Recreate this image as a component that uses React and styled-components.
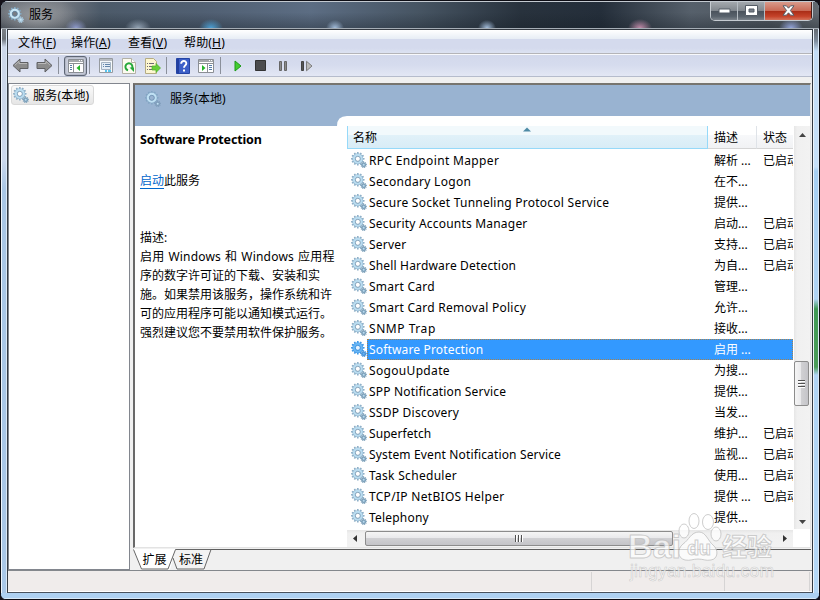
import React from 'react';
import styled, { createGlobalStyle } from 'styled-components';

const GlobalStyle = createGlobalStyle`
  * {
    box-sizing: border-box;
  }
  body {
    margin: 0;
    width: 820px;
    height: 600px;
    overflow: hidden;
    background: #15121a;
    color: #000;
    font: 12px/19px 'Noto Sans', 'Noto Sans CJK SC', sans-serif;
  }
`;

const Window = styled.div`
  position: relative;
  display: flex;
  flex-direction: column;
  width: 820px;
  height: 600px;
  border: 1px solid #0d0d14;
  border-radius: 8px 8px 6px 6px;
  overflow: hidden;
  background: #a8c8e8;
`;

const TitleBar = styled.header`
  display: flex;
  align-items: flex-start;
  height: 28px;
  padding-left: 7px;
  border-top: 1px solid #c3c9d0;
  border-bottom: 1px solid #a5adb5;
  background:
    radial-gradient(ellipse 11px 9px at 75px 26px, #8f9bcd, transparent),
    radial-gradient(ellipse 13px 9px at 137px 26px, #93a3b4, transparent),
    radial-gradient(ellipse 12px 9px at 210px 26px, #4b9fd4, transparent),
    radial-gradient(ellipse 9px 8px at 334px 26px, #a3bddb, transparent),
    radial-gradient(ellipse 9px 8px at 486px 26px, #a3bddb, transparent),
    radial-gradient(ellipse 12px 9px at 639px 26px, #bf8aa8, transparent),
    radial-gradient(ellipse 12px 9px at 790px 26px, #93a4da, transparent),
    radial-gradient(ellipse 42px 20px at 36px 14px, #9a9da1, transparent),
    linear-gradient(rgba(0, 0, 0, 0) 40%, rgba(20, 28, 36, 0.35)),
    linear-gradient(90deg, #686e76 0, #737880 60px, #4c5a69 100px, #505f72 200px, #5c6d83 310px, #465462 420px, #28323d 520px, #242e3a 600px, #56606b 690px, #50575f 770px, #646b72 820px);
`;

const WindowTitle = styled.div`
  display: flex;
  align-items: center;
  flex: 1;
  gap: 5px;
  height: 25px;
`;

const WindowButtons = styled.div`
  display: flex;
  height: 19px;
  margin-right: 6px;
  border: 1px solid #c5cbd1;
  border-top: 0;
  border-radius: 0 0 5px 5px;
  overflow: hidden;
`;

const WindowButton = styled.div`
  display: flex;
  align-items: center;
  justify-content: center;
  width: ${({ $close }) => ($close ? 47 : 27)}px;
  padding-bottom: 1px;
  border-right: 1px solid ${({ $close }) => ($close ? '#4b1c16' : '#b6bdc4')};
  background: ${({ $close }) =>
    $close
      ? 'linear-gradient(#d99a8b 0, #c96b57 48%, #a92c16 50%, #c5432a 80%, #d3745c)'
      : 'linear-gradient(#a3a8ad 0, #81878e 48%, #4a525c 50%, #59626c 80%, #7b828a)'};
`;

const Body = styled.div`
  display: flex;
  flex: 1;
  min-height: 0;
`;

const Edge = styled.div`
  width: 6px;
  border-left: 1px solid #eef5fc;
  border-right: 1px solid #dbe8f6;
  background: ${({ $right }) =>
    $right
      ? 'linear-gradient(#646a71 0, #7e8c9c 12px, #c3dcf5 22px, #c6e0f8 138px, #a6cff2 142px, #b0d4f4 270px, #3f9955 280px, #4b9c58 338px, #b0d4f4 346px, #b4d7f6)'
      : 'linear-gradient(#7c8187 0, #6c737a 10px, #ccd7e9 18px, #ccd8ec 130px, #a9c6e5 160px, #a9c7e7)'};
`;

const Client = styled.div`
  display: flex;
  flex-direction: column;
  flex: 1;
  min-width: 0;
  border: 1px solid #343a42;
  border-bottom-color: #49525e;
  background: #f0f0f0;
`;

const MenuBar = styled.nav`
  display: grid;
  grid-template-columns: 53px 57px 56px auto;
  height: 24px;
  padding: 2px 10px 0;
  border-bottom: 1px solid #b4b4b8;
  line-height: 21px;
  background: linear-gradient(#fff 0, #e7edf5 9px, #d4daed 9px, #d4daed 18px, #dce2f1 100%);
`;

const MenuItem = styled.span`
  white-space: nowrap;
  letter-spacing: 0.15px;
`;

const ToolBar = styled.div`
  display: flex;
  align-items: center;
  height: 23px;
  border-top: 1px solid #f8f9fc;
  border-bottom: 1px solid #b6bccc;
  background: linear-gradient(#d2d8eb, #d6dcee 50%, #e3e7f4);
`;

const Tool = styled.span`
  display: flex;
  align-items: center;
  justify-content: center;
  width: ${({ $size = 24 }) => $size}px;
  height: 20px;
  ${({ $pressed }) =>
    $pressed &&
    `
    border: 1px solid #5e6675;
    border-radius: 3px;
    background: #c9cddb;
    box-shadow: inset 0 0 2px #7d8494;
  `}
`;

const Separator = styled.span`
  width: 1px;
  height: 17px;
  margin: 0 ${({ $after = 5 }) => $after}px 0 ${({ $before = 4 }) => $before}px;
  background: #8b909b;
`;

const Panes = styled.main`
  display: flex;
  gap: 3px;
  flex: 1;
  min-height: 0;
  padding-top: 6px;
`;

const TreePane = styled.aside`
  width: 122px;
  padding: 1px 2px;
  border: 1px solid #82868e;
  background: #fff;
`;

const TreeItem = styled.div`
  display: flex;
  align-items: center;
  gap: 4px;
  width: 83px;
  height: 20px;
  padding-left: 1px;
  border: 1px solid #d9d9d9;
  border-radius: 3px;
  white-space: nowrap;
  letter-spacing: 0.2px;
  background: linear-gradient(#fafafa, #e6e6e6);
`;

const DetailSide = styled.section`
  display: flex;
  flex-direction: column;
  flex: 1;
  min-width: 0;
`;

const DetailPane = styled.div`
  display: flex;
  flex-direction: column;
  height: 465px;
  margin-right: 1px;
  border: 2px solid #696969;
  border-top-color: #77756f;
  border-right: 1px solid #e3e3e3;
  border-bottom: 1px solid #e3e3e3;
  background: #fff;
`;

const Banner = styled.div`
  display: flex;
  align-items: center;
  gap: 9px;
  height: 31px;
  padding: 0 10px 4px;
  letter-spacing: 0.1px;
  background: #99b3d1;
`;

const Split = styled.div`
  display: flex;
  flex: 1;
  min-height: 0;
`;

const Info = styled.div`
  width: 212px;
`;

const BannerTail = styled.div`
  height: 10px;
  background: #99b3d1;
  clip-path: path('M0 0H212V0Q202 0 202 10H0Z');
`;

const InfoText = styled.div`
  padding: 4px 8px 0 5px;
`;

const InfoTitle = styled.h1`
  margin: 0 0 22px;
  font-size: 12.5px;
  font-weight: 700;
  line-height: 19px;
  letter-spacing: -0.15px;
  white-space: nowrap;
`;

const InfoAction = styled.p`
  margin: 0 0 38px;
`;

const InfoLink = styled.a`
  color: #0066cc;
  text-decoration: underline;
  text-decoration-thickness: 1px;
  text-underline-offset: 3px;
`;

const InfoLine = styled.div`
  white-space: nowrap;
  ${({ $latin }) => $latin && 'letter-spacing: 0.2px; word-spacing: 0.7px;'}
`;

const ListArea = styled.div`
  display: grid;
  grid-template: 404px 17px / 447px 16px;
  padding-top: 10px;
`;

const List = styled.div`
  display: flex;
  flex-direction: column;
  overflow: hidden;
  width: 446px;
`;

const ListHeader = styled.div`
  display: grid;
  grid-template-columns: 361px 49px 36px;
  height: 24px;
  padding-bottom: 1px;
`;

const HeaderCell = styled.div`
  position: relative;
  padding: 3px 0 0 ${({ $pad = 6 }) => $pad}px;
  border-right: 1px solid ${({ $sorted }) => ($sorted ? '#96d9f9' : '#dfe3e8')};
  border-bottom: 1px solid ${({ $sorted }) => ($sorted ? '#96d9f9' : '#d5d5d5')};
  ${({ $sorted }) => $sorted && 'border-left: 1px solid #96d9f9;'}
  ${({ $last }) => $last && 'border-right: 0;'}
  line-height: 18px;
  background: ${({ $sorted }) =>
    $sorted
      ? 'linear-gradient(#f2f9fc 0, #f2f9fc 9px, #e1f1f9 9px, #d8ecf6)'
      : 'linear-gradient(#fff 0, #fff 9px, #f7f8fa 9px, #f1f2f4)'};
`;

const SortArrow = styled.svg`
  position: absolute;
  top: 1px;
  left: 175px;
`;

const Row = styled.div`
  display: grid;
  grid-template-columns: 20px 340px 50px 36px;
  height: 21px;
  line-height: 22px;
  white-space: nowrap;
  color: ${({ $selected }) => ($selected ? '#fff' : '#000')};
  background: ${({ $selected }) => ($selected ? 'linear-gradient(90deg, #fff 20px, #3399ff 20px)' : 'none')};
`;

const IconCell = styled.div`
  height: 21px;
  padding: 2px 0 0 4px;
  line-height: 0;
`;

const NameCell = styled.div`
  height: 21px;
  padding-left: 2px;
  letter-spacing: ${({ $spacing = 0 }) => $spacing}px;
  ${({ $selected }) => $selected && 'outline: 1px dotted #a5814f; outline-offset: -1px; width: 426px;'}
`;

const Cell = styled.div`
  height: 21px;
  padding-left: ${({ $pad = 7 }) => $pad}px;
  overflow: hidden;
`;

const VScroll = styled.div`
  display: flex;
  flex-direction: column;
  align-items: center;
  width: 16px;
  height: 403px;
  padding: 7px 0 5px;
  background: linear-gradient(90deg, #e6e6e6, #f0f0f0 20%, #f2f2f2);
`;

const VThumb = styled.div`
  display: flex;
  flex-direction: column;
  align-items: center;
  justify-content: center;
  gap: 1px;
  width: 15px;
  height: 45px;
  margin: 224px 1px auto 0;
  border: 1px solid #8c8c8c;
  border-radius: 2px;
  background: linear-gradient(90deg, #f5f5f5, #e9e9eb 45%, #d0d0d3 50%, #c4c4c8);
`;

const HScroll = styled.div`
  display: flex;
  align-items: center;
  height: 17px;
  width: 446px;
  padding: 0 6px 0 6px;
  background: linear-gradient(#e6e6e6, #f0f0f0 20%, #f2f2f2);
`;

const HThumb = styled.div`
  display: flex;
  align-items: center;
  justify-content: center;
  gap: 1px;
  width: 308px;
  height: 15px;
  margin: 0 auto 0 8px;
  border: 1px solid #8c8c8c;
  border-radius: 2px;
  background: linear-gradient(#f5f5f5, #e9e9eb 45%, #d0d0d3 50%, #c4c4c8);
`;

const Grip = styled.i`
  width: ${({ $vertical }) => ($vertical ? 2 : 7)}px;
  height: ${({ $vertical }) => ($vertical ? 7 : 2)}px;
  border: solid #505050;
  border-width: ${({ $vertical }) => ($vertical ? '0 0 0 1px' : '1px 0 0')};
  background: #fff;
`;

const Tabs = styled.div`
  flex: 1;
  padding-top: 1px;
`;

const TabText = styled.text`
  font-size: 12px;
`;

const StatusBar = styled.footer`
  display: grid;
  grid-template-columns: 584px 133px 85px 1fr;
  height: 22px;
  padding-top: 1px;
  border-top: 1px solid #84878c;
  border-bottom: 1px solid #fff;
  background: #f0eceb;
`;

const StatusCell = styled.div`
  border-right: 1px solid #d6d4d4;
`;

const Watermark = styled.div`
  position: absolute;
  left: 623px;
  top: 507px;
  width: 160px;
  height: 80px;
`;

const gearPath = (cx, cy, teeth, outer, inner) => {
  const points = [];
  for (let i = 0; i < teeth; i += 1) {
    [[-0.32, inner], [-0.22, outer], [0.22, outer], [0.32, inner]].forEach(([shift, r]) => {
      const a = ((i + shift) / teeth) * Math.PI * 2;
      points.push(`${(cx + r * Math.sin(a)).toFixed(2)} ${(cy - r * Math.cos(a)).toFixed(2)}`);
    });
  }
  return `M${points.join('L')}Z`;
};

const bigGear = gearPath(6.8, 6.8, 12, 6.8, 5.4);
const smallGear = gearPath(12.7, 12.8, 9, 3.3, 2.4);

const gearColors = {
  list: { teeth: '#8fb0c8', ring: '#b9dcf0', hole: '#fff', rim: '#7596b0', small: '#7fa2bb' },
  selected: { teeth: '#3f97e6', ring: '#66b5f5', hole: '#e6f3ff', rim: '#2d86d8', small: '#4d96da' },
  banner: { teeth: '#83a6c4', ring: '#bfe0f3', hole: '#99b3d1', rim: '#7092b3', small: '#7f9dbb' },
  title: { teeth: '#85a9c2', ring: '#c8e6f6', hole: '#777c84', rim: '#5d7d99', small: '#a9c8dc' },
};

const Gears = ({ variant = 'list' }) => {
  const colors = gearColors[variant];
  return (
    <svg width="16" height="16" viewBox="0 0 16 16">
      <path d={bigGear} fill={colors.teeth} />
      <circle cx="6.8" cy="6.8" r="3.8" fill="none" stroke={colors.ring} strokeWidth="2.4" />
      <circle cx="6.8" cy="6.8" r="2.5" fill={colors.hole} stroke={colors.rim} strokeWidth=".8" />
      <path d={smallGear} fill={colors.small} />
      <circle cx="12.7" cy="12.8" r="1" fill={colors.ring} />
    </svg>
  );
};

const BackArrow = ({ flip }) => (
  <svg width="17" height="15" viewBox="0 0 17 15">
    <g transform={flip ? 'translate(17 0) scale(-1 1)' : undefined}>
      <path d="M1 7.5 8 1v3.5h8v6H8V14Z" fill="#8c8c8c" stroke="#5f6063" />
      <path d="M2.8 7.3 7 3.3v2.2h8" fill="none" stroke="#b9b9b9" />
    </g>
  </svg>
);

const PanelIcon = ({ right }) => (
  <svg width="16" height="14" viewBox="0 0 16 14">
    <path d="M.5.5h15v13H.5z" fill="#fff" stroke="#8b8f94" />
    <path d="M1 1h14v2H1z" fill="#a5a9ad" />
    <path d="M11 1.5h1m1 0h1" stroke="#fff" />
    <path d="M1 4.5h14" stroke="#8b8f94" />
    <path d={right ? 'M9.5 5v8' : 'M5.5 5v8'} stroke="#8b8f94" />
    <path d={right ? 'M11 6.5h3m-3 2h3m-3 2h3' : 'M2 6.5h2m-2 2h2m-2 2h2'} stroke="#557da8" />
    <path d={right ? 'M4 6v6l3.5-3z' : 'M12 6v6L8.5 9z'} fill="#25b52a" />
  </svg>
);

const PropertiesIcon = () => (
  <svg width="16" height="16" viewBox="0 0 16 16">
    <path d="M1.5.5h13v14h-13z" fill="#f7fafc" stroke="#969ba0" />
    <path d="M2 2h12" stroke="#b7bbc1" strokeWidth="2" />
    <path d="M3.5 4.5h9v7h-9z" fill="#e4edf6" stroke="#a3b2c2" />
    <path d="M5 6.5h1m1 0h5m-7 2h1m1 0h5" stroke="#6587aa" />
    <path d="M7 13h2m1 0h3" stroke="#26b3e8" strokeWidth="1.5" />
  </svg>
);

const RefreshIcon = () => (
  <svg width="14" height="16" viewBox="0 0 14 16">
    <path d="M.5.5h9l4 4v11H.5z" fill="#fcfbf0" stroke="#b3b1a5" />
    <path d="M9.5.5v4h4" fill="#fff" stroke="#b3b1a5" />
    <path d="M6 12.200A3.500 3.500 0 1 1 10 10.500" fill="none" stroke="#25a83a" strokeWidth="2" />
    <path d="M7.500 9.500H12v4.500z" fill="#25a83a" />
  </svg>
);

const ExportIcon = () => (
  <svg width="17" height="16" viewBox="0 0 17 16">
    <path d="M1.5.5h8l3 3v12h-11z" fill="#fdf6d0" stroke="#b5ac83" />
    <path d="M3 5.5h1m1 0h5m-7 3h1m1 0h5m-7 3h1m1 0h4" stroke="#6d6a77" />
    <path d="M8 8h4V5.5L16.5 10 12 14.5V12H8z" fill="#68cf3a" stroke="#4bae26" strokeWidth=".7" />
  </svg>
);

const HelpIcon = () => (
  <svg width="14" height="16" viewBox="0 0 14 16">
    <path d="M.5.5h13v15H.5z" fill="#3c5fc8" stroke="#2444a4" />
    <path d="M1 1h2v14H1z" fill="#2340a0" />
    <path d="M5.2 5.8C5 2 10.6 2.2 10.3 5.6 10.1 7.4 8 7.4 8 9.8" fill="none" stroke="#fff" strokeWidth="1.9" />
    <path d="M7 11.5h2v2H7z" fill="#fff" />
  </svg>
);

const services = [
  { name: 'RPC Endpoint Mapper', spacing: 0.35, text: '解析 ...', started: true },
  { name: 'Secondary Logon', spacing: 0.3, text: '在不...' },
  { name: 'Secure Socket Tunneling Protocol Service', spacing: 0.24, text: '提供...' },
  { name: 'Security Accounts Manager', spacing: 0.2, text: '启动...', started: true },
  { name: 'Server', spacing: 0.2, text: '支持...', started: true },
  { name: 'Shell Hardware Detection', spacing: 0.17, text: '为自...', started: true },
  { name: 'Smart Card', spacing: 0.24, text: '管理...' },
  { name: 'Smart Card Removal Policy', spacing: 0.26, text: '允许...' },
  { name: 'SNMP Trap', spacing: 0.55, text: '接收...' },
  { name: 'Software Protection', spacing: 0.16, text: '启用 ...', selected: true },
  { name: 'SogouUpdate', spacing: 0.33, text: '为搜...' },
  { name: 'SPP Notification Service', spacing: 0.17, text: '提供...' },
  { name: 'SSDP Discovery', spacing: 0.25, text: '当发...' },
  { name: 'Superfetch', spacing: 0.08, text: '维护...', started: true },
  { name: 'System Event Notification Service', spacing: 0.15, text: '监视...', started: true },
  { name: 'Task Scheduler', spacing: 0.3, text: '使用...', started: true },
  { name: 'TCP/IP NetBIOS Helper', spacing: 0.3, text: '提供 ...', started: true },
  { name: 'Telephony', spacing: 0.2, text: '提供...' },
];

const menus = [
  ['文件', 'F'],
  ['操作', 'A'],
  ['查看', 'V'],
  ['帮助', 'H'],
];

const description = [
  '描述:',
  '启用 Windows 和 Windows 应用程',
  '序的数字许可证的下载、安装和实',
  '施。如果禁用该服务，操作系统和许',
  '可的应用程序可能以通知模式运行。',
  '强烈建议您不要禁用软件保护服务。',
];

const App = () => (
  <>
    <GlobalStyle />
    <Window>
      <TitleBar>
        <WindowTitle>
          <Gears variant="title" />
          服务
        </WindowTitle>
        <WindowButtons>
          <WindowButton>
            <svg width="13" height="6" viewBox="0 0 13 6">
              <path d="M1 1h11v4H1z" fill="#fff" stroke="#555c66" />
            </svg>
          </WindowButton>
          <WindowButton>
            <svg width="13" height="11" viewBox="0 0 13 11">
              <path d="M.5.5h12v10H.5z" fill="#fff" stroke="#555c66" />
              <path d="M4 4h5v3H4z" fill="#777e88" stroke="#555c66" />
            </svg>
          </WindowButton>
          <WindowButton $close>
            <svg width="13" height="11" viewBox="0 0 13 11">
              <path
                d="M1 .8h3.4l2.1 2.4L8.6.8H12L8.4 5.5l3.6 4.7H8.6L6.5 7.8l-2.1 2.4H1l3.6-4.7z"
                fill="#fff"
                stroke="#555c66"
              />
            </svg>
          </WindowButton>
        </WindowButtons>
      </TitleBar>
      <Body>
        <Edge />
        <Client>
          <MenuBar>
            {menus.map(([label, key]) => (
              <MenuItem key={key}>
                {label}(<u>{key}</u>)
              </MenuItem>
            ))}
          </MenuBar>
          <ToolBar>
            <Tool $size={25}>
              <BackArrow />
            </Tool>
            <Tool $size={22}>
              <BackArrow flip />
            </Tool>
            <Separator $before={3} />
            <Tool $pressed $size={23}>
              <PanelIcon />
            </Tool>
            <Separator $before={2} />
            <Tool $size={21}>
              <PropertiesIcon />
            </Tool>
            <Tool $size={26}>
              <RefreshIcon />
            </Tool>
            <Tool $size={20}>
              <ExportIcon />
            </Tool>
            <Separator $before={4} />
            <Tool $size={21}>
              <HelpIcon />
            </Tool>
            <Tool $size={26}>
              <PanelIcon right />
            </Tool>
            <Separator $before={1} />
            <Tool $size={24}>
              <svg width="8" height="12" viewBox="0 0 8 12">
                <path d="M1 1v10l6-5z" fill="#44cc31" stroke="#1d9a17" />
              </svg>
            </Tool>
            <Tool $size={20}>
              <svg width="11" height="11" viewBox="0 0 11 11">
                <path d="M.5.5h10v10H.5z" fill="#4c4c4e" stroke="#333" />
              </svg>
            </Tool>
            <Tool $size={26}>
              <svg width="8" height="10" viewBox="0 0 8 10">
                <path d="M.5.5h2v9h-2zm5 0h2v9h-2z" fill="#8b8b8b" stroke="#666" />
              </svg>
            </Tool>
            <Tool $size={21}>
              <svg width="13" height="12" viewBox="0 0 13 12">
                <path d="M1.500 1.500h2v9h-2z" fill="#555" stroke="#444" />
                <path d="M6.500 1.300v9.500l5.500-4.800z" fill="#bbb" stroke="#7c7c7c" />
              </svg>
            </Tool>
          </ToolBar>
          <Panes>
            <TreePane>
              <TreeItem>
                <Gears />
                服务(本地)
              </TreeItem>
            </TreePane>
            <DetailSide>
              <DetailPane>
                <Banner>
                  <Gears variant="banner" />
                  服务(本地)
                </Banner>
                <Split>
                  <Info>
                    <BannerTail />
                    <InfoText>
                      <InfoTitle>Software Protection</InfoTitle>
                      <InfoAction>
                        <InfoLink>启动</InfoLink>此服务
                      </InfoAction>
                      {description.map(line => (
                        <InfoLine key={line} $latin={/[a-z]/.test(line)}>
                          {line}
                        </InfoLine>
                      ))}
                    </InfoText>
                  </Info>
                  <ListArea>
                    <List>
                      <ListHeader>
                        <HeaderCell $sorted $pad={5}>
                          名称
                          <SortArrow width="8" height="5" viewBox="0 0 8 5">
                            <path d="M0 4.5 4 .5l4 4z" fill="#4d8aa5" />
                          </SortArrow>
                        </HeaderCell>
                        <HeaderCell>描述</HeaderCell>
                        <HeaderCell $last>状态</HeaderCell>
                      </ListHeader>
                      {services.map(({ name, spacing, text, started, selected }) => (
                        <Row key={name} $selected={selected}>
                          <IconCell>
                            <Gears variant={selected ? 'selected' : 'list'} />
                          </IconCell>
                          <NameCell $spacing={spacing} $selected={selected}>
                            {name}
                          </NameCell>
                          <Cell>{text}</Cell>
                          <Cell $pad={6}>{started && '已启动'}</Cell>
                        </Row>
                      ))}
                    </List>
                    <VScroll>
                      <svg width="7" height="4" viewBox="0 0 7 4">
                        <path d="M0 4 3.5 0 7 4z" fill="#444" />
                      </svg>
                      <VThumb>
                        <Grip />
                        <Grip />
                        <Grip />
                      </VThumb>
                      <svg width="7" height="4" viewBox="0 0 7 4">
                        <path d="M0 0h7L3.5 4z" fill="#444" />
                      </svg>
                    </VScroll>
                    <HScroll>
                      <svg width="4" height="7" viewBox="0 0 4 7">
                        <path d="M4 0v7L0 3.5z" fill="#333" />
                      </svg>
                      <HThumb>
                        <Grip $vertical />
                        <Grip $vertical />
                        <Grip $vertical />
                      </HThumb>
                      <svg width="4" height="7" viewBox="0 0 4 7">
                        <path d="M0 0v7l4-3.5z" fill="#333" />
                      </svg>
                    </HScroll>
                  </ListArea>
                </Split>
              </DetailPane>
              <Tabs>
                <svg width="678" height="21" viewBox="0 0 678 21" display="block">
                  <path d="M42 .5h636" stroke="#5f5f5f" />
                  <path d="M0 0h43l-6 20.5H8z" fill="#fff" />
                  <path d="M43 .5h35l-7 19.5H44l-5-9z" fill="#f3f3f3" />
                  <path d="m.5.5 8 19.5H35L42.500.5H78L71 20H44l-4-11" fill="none" stroke="#666" />
                  <TabText x="9.5" y="15">扩展</TabText>
                  <TabText x="46" y="15">标准</TabText>
                </svg>
              </Tabs>
            </DetailSide>
          </Panes>
          <StatusBar>
            <StatusCell />
            <StatusCell />
            <StatusCell />
          </StatusBar>
        </Client>
        <Edge $right />
      </Body>
      <svg width="818" height="6" viewBox="0 0 818 6" display="block">
        <path d="M0 0h818v6H0z" fill="#aed1f2" />
        <path d="M0 5.5h818" stroke="#d8e9f8" />
      </svg>
      <Watermark>
        <svg width="160" height="80" viewBox="0 0 160 80">
          <g
            fill="#fff"
            fillOpacity=".7"
            stroke="#b8b8b8"
            strokeOpacity=".7"
            fontFamily="Liberation Sans, Noto Sans CJK SC, sans-serif"
          >
            <ellipse cx="60" cy="23" rx="5" ry="7" />
            <ellipse cx="70" cy="13" rx="5" ry="7.5" />
            <ellipse cx="84" cy="14" rx="5.5" ry="7.5" />
            <ellipse cx="92" cy="26" rx="5" ry="7" />
            <path d="M75 24c7 0 9 9 14 13 6 5 5 14-2 15-5 1-8-1-13-1s-8 2-13 1c-8-2-8-11-2-16 6-4 8-12 16-12Z" />
            <text x="4" y="50" fontSize="34" fontWeight="700" textLength="53">Bai</text>
            <text x="63" y="47" fontSize="20" fontWeight="700" textLength="24">du</text>
            <text x="98" y="48" fontSize="25" fontWeight="700" textLength="50">经验</text>
            <text x="6" y="69" fontSize="17.5" strokeWidth=".6" textLength="144">jingyan.baidu.com</text>
          </g>
        </svg>
      </Watermark>
    </Window>
  </>
);

export default App;
